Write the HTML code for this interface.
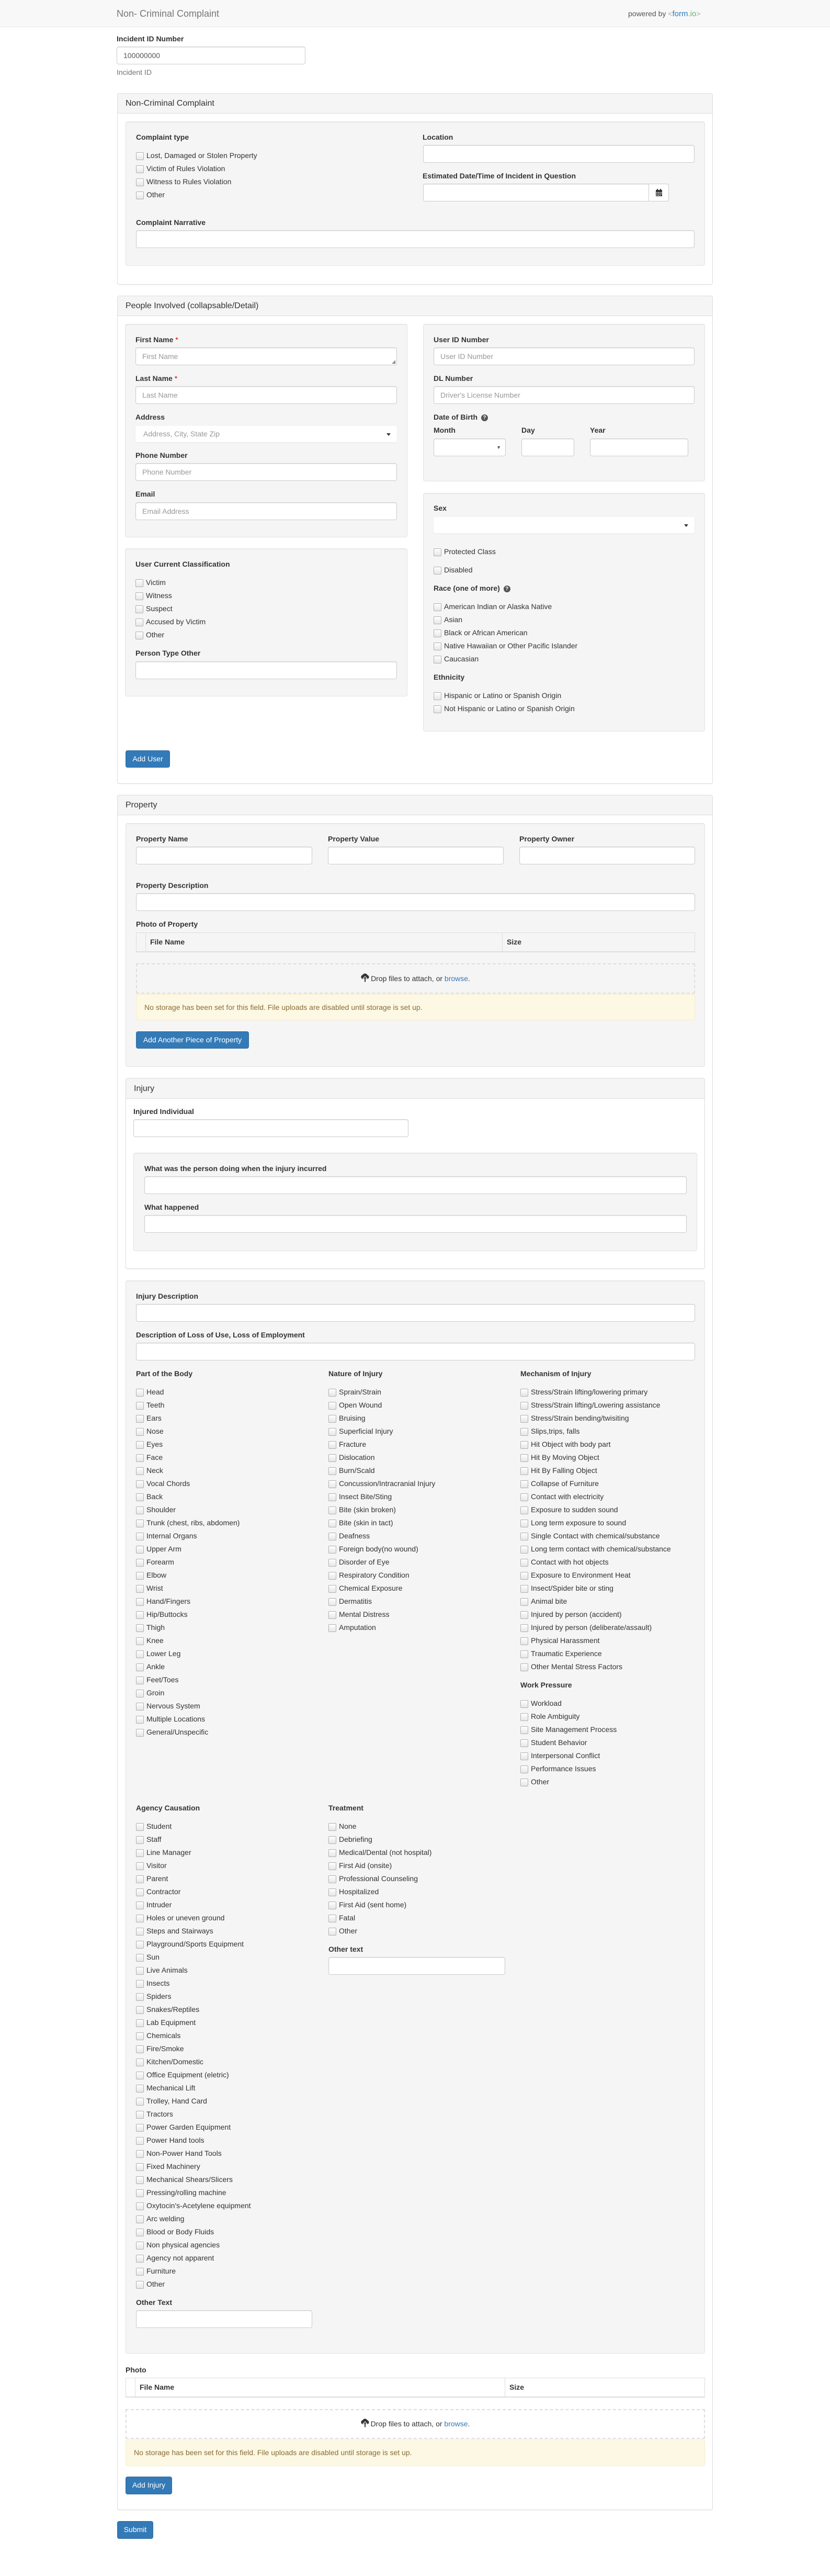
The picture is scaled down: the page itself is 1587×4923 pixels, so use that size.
<!DOCTYPE html>
<html><head><meta charset="utf-8">
<style>
*{box-sizing:border-box;margin:0;padding:0}
body{width:1587px;height:4923px;position:relative;background:#fff;font-family:"Liberation Sans",Arial,sans-serif;font-size:14px;color:#333;overflow:hidden}
.a{position:absolute}
.l{position:absolute;font-weight:bold;line-height:20px;white-space:nowrap}
.i{position:absolute;height:34px;border:1px solid #ccc;border-radius:4px;background:#fff;box-shadow:inset 0 1px 1px rgba(0,0,0,.075);color:#999;line-height:32px;padding-left:12px;white-space:nowrap}
.w{position:absolute;background:#f5f5f5;border:1px solid #e3e3e3;border-radius:4px;box-shadow:inset 0 1px 1px rgba(0,0,0,.05)}
.p{position:absolute;border:1px solid #ddd;border-radius:4px;background:#fff;box-shadow:0 1px 1px rgba(0,0,0,.05)}
.ph{position:absolute;left:0;right:0;top:0;background:#f5f5f5;border-bottom:1px solid #ddd;border-radius:3px 3px 0 0;font-size:16px;padding-left:15px}
.c{position:absolute;padding-left:20px;line-height:20px;white-space:nowrap}
.c::before,.k .c::before{content:"";position:absolute;left:0;top:4px;width:13px;height:13px;border:1px solid #b0b0b0;border-radius:2px;background:linear-gradient(#fff,#e6e6e6)}
.k{position:absolute}
.k .c{position:relative;height:25px;line-height:25px}
.k .c::before{top:6px}
.b{position:absolute;background:#337ab7;border:1px solid #2e6da4;border-radius:4px;color:#fff;text-align:center;line-height:31px;white-space:nowrap}
.sel{position:absolute;height:31px;background:#fff;border-radius:4px;box-shadow:0 1px 2px rgba(0,0,0,.06);color:#999;line-height:31px;padding-left:15px}
.sel::after{content:"";position:absolute;right:12px;top:14px;border-left:4px solid transparent;border-right:4px solid transparent;border-top:5px solid #333}
.q{display:inline-block;width:13px;height:13px;border-radius:50%;background:#555;color:#fff;font-size:10px;line-height:13px;text-align:center;vertical-align:1px;margin-left:3px}
.tbl{position:absolute;height:38px;border:1px solid #ddd;border-bottom:2px solid #ddd;font-weight:bold;line-height:34px}
.dz{position:absolute;border:2px dashed #ddd;text-align:center;color:#333}
.dz svg{vertical-align:-3px;margin-right:3px}
.al{position:absolute;background:#fcf8e3;border:1px solid #faebcc;border-radius:4px;color:#8a6d3b}
.req{color:#c00;font-weight:normal}
</style></head><body>

<div class="a" style="left:0;top:0;width:1587px;height:52px;background:#f8f8f8;border-bottom:1px solid #e7e7e7"></div>
<div class="a" style="left:223px;top:15px;font-size:18px;color:#777;line-height:22px">Non- Criminal Complaint</div>
<div class="a" style="left:1201px;top:16px;line-height:20px;font-size:14px;color:#555">powered by <span style="color:#aaa">&lt;</span><span style="color:#2a7ab9;font-size:15px">form</span><span style="color:#5cb85c;font-size:15px">.io</span><span style="color:#aaa">&gt;</span></div>

<div class="l" style="left:223px;top:64px">Incident ID Number</div>
<div class="i" style="left:223px;top:89px;width:361px;color:#555">100000000</div>
<div class="a" style="left:223px;top:128px;color:#737373;line-height:20px">Incident ID</div>

<div class="p" style="left:224px;top:178px;width:1139px;height:366px"><div class="ph" style="height:38px;line-height:38px">Non-Criminal Complaint</div></div>
<div class="w" style="left:240px;top:232px;width:1108px;height:276px"></div>
<div class="l" style="left:260px;top:252px">Complaint type</div>
<div class="c" style="left:260px;top:287px">Lost, Damaged or Stolen Property</div>
<div class="c" style="left:260px;top:312px">Victim of Rules Violation</div>
<div class="c" style="left:260px;top:337px">Witness to Rules Violation</div>
<div class="c" style="left:260px;top:362px">Other</div>
<div class="l" style="left:808px;top:252px">Location</div>
<div class="i" style="left:809px;top:277px;width:519px"></div>
<div class="l" style="left:808px;top:326px">Estimated Date/Time of Incident in Question</div>
<div class="i" style="left:809px;top:351px;width:470px;border-radius:4px"></div>
<div class="a" style="left:1240px;top:351px;width:39px;height:34px;border:1px solid #ccc;border-radius:0 4px 4px 0;background:#fff">
<svg width="12" height="14" viewBox="0 0 12 14" style="position:absolute;left:13px;top:9px"><rect x="0" y="2" width="12" height="12" fill="#333"/><rect x="2" y="0" width="2" height="3" fill="#333"/><rect x="8" y="0" width="2" height="3" fill="#333"/><g fill="#fff"><rect x="1" y="6" width="2" height="1.5"/><rect x="4" y="6" width="2" height="1.5"/><rect x="7" y="6" width="2" height="1.5"/><rect x="1" y="9" width="2" height="1.5"/><rect x="4" y="9" width="2" height="1.5"/><rect x="7" y="9" width="2" height="1.5"/><rect x="1" y="12" width="2" height="1"/><rect x="4" y="12" width="2" height="1"/><rect x="7" y="12" width="2" height="1"/><rect x="10" y="6" width="1.5" height="1.5"/><rect x="10" y="9" width="1.5" height="1.5"/></g></svg></div>
<div class="l" style="left:260px;top:415px">Complaint Narrative</div>
<div class="i" style="left:260px;top:440px;width:1068px"></div>

<div class="p" style="left:224px;top:565px;width:1139px;height:933px"><div class="ph" style="height:38px;line-height:38px">People Involved (collapsable/Detail)</div></div>
<div class="w" style="left:239px;top:619px;width:540px;height:408px"></div>
<div class="l" style="left:259px;top:639px">First Name <span class="req">*</span></div>
<div class="i" style="left:259px;top:664px;width:500px">First Name<span style="position:absolute;right:2px;bottom:-10px;font-size:9px;color:#888">◢</span></div>
<div class="l" style="left:259px;top:713px">Last Name <span class="req">*</span></div>
<div class="i" style="left:259px;top:738px;width:500px">Last Name</div>
<div class="l" style="left:259px;top:787px">Address</div>
<div class="sel" style="left:259px;top:814px;width:500px">Address, City, State Zip</div>
<div class="l" style="left:259px;top:860px">Phone Number</div>
<div class="i" style="left:259px;top:885px;width:500px">Phone Number</div>
<div class="l" style="left:259px;top:934px">Email</div>
<div class="i" style="left:259px;top:960px;width:500px">Email Address</div>

<div class="w" style="left:239px;top:1048px;width:540px;height:283px"></div>
<div class="l" style="left:259px;top:1068px">User Current Classification</div>
<div class="k" style="left:259px;top:1100.5px"><div class="c">Victim</div><div class="c">Witness</div><div class="c">Suspect</div><div class="c">Accused by Victim</div><div class="c">Other</div></div>
<div class="l" style="left:259px;top:1238px">Person Type Other</div>
<div class="i" style="left:259px;top:1264px;width:500px"></div>

<div class="w" style="left:809px;top:619px;width:539px;height:301px"></div>
<div class="l" style="left:829px;top:639px">User ID Number</div>
<div class="i" style="left:829px;top:664px;width:499px">User ID Number</div>
<div class="l" style="left:829px;top:713px">DL Number</div>
<div class="i" style="left:829px;top:738px;width:499px">Driver's License Number</div>
<div class="l" style="left:829px;top:787px">Date of Birth <span class="q">?</span></div>
<div class="l" style="left:829px;top:812px">Month</div>
<div class="l" style="left:997px;top:812px">Day</div>
<div class="l" style="left:1128px;top:812px">Year</div>
<div class="i" style="left:829px;top:838px;width:138px"><span style="position:absolute;right:8px;top:0;font-size:9px;color:#555">▼</span></div>
<div class="i" style="left:997px;top:838px;width:101px"></div>
<div class="i" style="left:1128px;top:838px;width:188px"></div>

<div class="w" style="left:809px;top:942px;width:539px;height:456px"></div>
<div class="l" style="left:829px;top:961px">Sex</div>
<div class="sel" style="left:829px;top:988px;width:499px"></div>
<div class="c" style="left:829px;top:1044px">Protected Class</div>
<div class="c" style="left:829px;top:1079px">Disabled</div>
<div class="l" style="left:829px;top:1114px">Race (one of more) <span class="q">?</span></div>
<div class="k" style="left:829px;top:1146.5px"><div class="c">American Indian or Alaska Native</div><div class="c">Asian</div><div class="c">Black or African American</div><div class="c">Native Hawaiian or Other Pacific Islander</div><div class="c">Caucasian</div></div>
<div class="l" style="left:829px;top:1284px">Ethnicity</div>
<div class="k" style="left:829px;top:1316.5px"><div class="c">Hispanic or Latino or Spanish Origin</div><div class="c">Not Hispanic or Latino or Spanish Origin</div></div>

<div class="b" style="left:240px;top:1434px;width:85px;height:33px">Add User</div>

<div class="p" style="left:224px;top:1519px;width:1139px;height:3278px"><div class="ph" style="height:38px;line-height:38px">Property</div></div>
<div class="w" style="left:240px;top:1573px;width:1108px;height:466px"></div>
<div class="l" style="left:260px;top:1593px">Property Name</div>
<div class="l" style="left:627px;top:1593px">Property Value</div>
<div class="l" style="left:993px;top:1593px">Property Owner</div>
<div class="i" style="left:260px;top:1618px;width:337px"></div>
<div class="i" style="left:627px;top:1618px;width:336px"></div>
<div class="i" style="left:993px;top:1618px;width:336px"></div>
<div class="l" style="left:260px;top:1682px">Property Description</div>
<div class="i" style="left:260px;top:1707px;width:1069px"></div>
<div class="l" style="left:260px;top:1756px">Photo of Property</div>
<div class="tbl" style="left:260px;top:1782px;width:1069px"><span class="a" style="left:17px;top:0;height:35px;border-left:1px solid #ddd"></span><span class="a" style="left:26px">File Name</span><span class="a" style="left:699px;top:0;height:35px;border-left:1px solid #ddd"></span><span class="a" style="left:708px">Size</span></div>
<div class="dz" style="left:260px;top:1841px;width:1069px;height:58px;line-height:54px"><svg width="16" height="18" viewBox="0 0 16 18"><path d="M4 11a4 4 0 0 1-0.5-7.9A5 5 0 0 1 12.5 3.5 3.8 3.8 0 0 1 12 11z" fill="#333"/><path d="M8 6l-4 4h2.5v7h3v-7H12z" fill="#333" stroke="#f5f5f5" stroke-width="1"/></svg>Drop files to attach, or <span style="color:#337ab7">browse</span>.</div>
<div class="al" style="left:260px;top:1900px;width:1069px;height:50px;line-height:48px;padding-left:15px">No storage has been set for this field. File uploads are disabled until storage is set up.</div>
<div class="b" style="left:260px;top:1971px;width:216px;height:33px">Add Another Piece of Property</div>

<div class="p" style="left:240px;top:2060px;width:1108px;height:365px"><div class="ph" style="height:39px;line-height:39px">Injury</div></div>
<div class="l" style="left:255px;top:2114px">Injured Individual</div>
<div class="i" style="left:255px;top:2139px;width:526px"></div>
<div class="w" style="left:255px;top:2203px;width:1078px;height:188px"></div>
<div class="l" style="left:276px;top:2223px">What was the person doing when the injury incurred</div>
<div class="i" style="left:276px;top:2248px;width:1037px"></div>
<div class="l" style="left:276px;top:2297px">What happened</div>
<div class="i" style="left:276px;top:2322px;width:1037px"></div>

<div class="w" style="left:240px;top:2447px;width:1108px;height:2051px"></div>
<div class="l" style="left:260px;top:2467px">Injury Description</div>
<div class="i" style="left:260px;top:2492px;width:1069px"></div>
<div class="l" style="left:260px;top:2541px">Description of Loss of Use, Loss of Employment</div>
<div class="i" style="left:260px;top:2566px;width:1069px"></div>
<div class="l" style="left:260px;top:2615px">Part of the Body</div>
<div class="l" style="left:628px;top:2615px">Nature of Injury</div>
<div class="l" style="left:995px;top:2615px">Mechanism of Injury</div>
<div class="k" style="left:260px;top:2647.5px">
<div class="c">Head</div><div class="c">Teeth</div><div class="c">Ears</div><div class="c">Nose</div><div class="c">Eyes</div><div class="c">Face</div><div class="c">Neck</div><div class="c">Vocal Chords</div><div class="c">Back</div><div class="c">Shoulder</div><div class="c">Trunk (chest, ribs, abdomen)</div><div class="c">Internal Organs</div><div class="c">Upper Arm</div><div class="c">Forearm</div><div class="c">Elbow</div><div class="c">Wrist</div><div class="c">Hand/Fingers</div><div class="c">Hip/Buttocks</div><div class="c">Thigh</div><div class="c">Knee</div><div class="c">Lower Leg</div><div class="c">Ankle</div><div class="c">Feet/Toes</div><div class="c">Groin</div><div class="c">Nervous System</div><div class="c">Multiple Locations</div><div class="c">General/Unspecific</div></div>
<div class="k" style="left:628px;top:2647.5px">
<div class="c">Sprain/Strain</div><div class="c">Open Wound</div><div class="c">Bruising</div><div class="c">Superficial Injury</div><div class="c">Fracture</div><div class="c">Dislocation</div><div class="c">Burn/Scald</div><div class="c">Concussion/Intracranial Injury</div><div class="c">Insect Bite/Sting</div><div class="c">Bite (skin broken)</div><div class="c">Bite (skin in tact)</div><div class="c">Deafness</div><div class="c">Foreign body(no wound)</div><div class="c">Disorder of Eye</div><div class="c">Respiratory Condition</div><div class="c">Chemical Exposure</div><div class="c">Dermatitis</div><div class="c">Mental Distress</div><div class="c">Amputation</div></div>
<div class="k" style="left:995px;top:2647.5px">
<div class="c">Stress/Strain lifting/lowering primary</div><div class="c">Stress/Strain lifting/Lowering assistance</div><div class="c">Stress/Strain bending/twisiting</div><div class="c">Slips,trips, falls</div><div class="c">Hit Object with body part</div><div class="c">Hit By Moving Object</div><div class="c">Hit By Falling Object</div><div class="c">Collapse of Furniture</div><div class="c">Contact with electricity</div><div class="c">Exposure to sudden sound</div><div class="c">Long term exposure to sound</div><div class="c">Single Contact with chemical/substance</div><div class="c">Long term contact with chemical/substance</div><div class="c">Contact with hot objects</div><div class="c">Exposure to Environment Heat</div><div class="c">Insect/Spider bite or sting</div><div class="c">Animal bite</div><div class="c">Injured by person (accident)</div><div class="c">Injured by person (deliberate/assault)</div><div class="c">Physical Harassment</div><div class="c">Traumatic Experience</div><div class="c">Other Mental Stress Factors</div></div>
<div class="l" style="left:995px;top:3210px">Work Pressure</div>
<div class="k" style="left:995px;top:3242.5px">
<div class="c">Workload</div><div class="c">Role Ambiguity</div><div class="c">Site Management Process</div><div class="c">Student Behavior</div><div class="c">Interpersonal Conflict</div><div class="c">Performance Issues</div><div class="c">Other</div></div>

<div class="l" style="left:260px;top:3445px">Agency Causation</div>
<div class="l" style="left:628px;top:3445px">Treatment</div>
<div class="k" style="left:260px;top:3477.5px">
<div class="c">Student</div><div class="c">Staff</div><div class="c">Line Manager</div><div class="c">Visitor</div><div class="c">Parent</div><div class="c">Contractor</div><div class="c">Intruder</div><div class="c">Holes or uneven ground</div><div class="c">Steps and Stairways</div><div class="c">Playground/Sports Equipment</div><div class="c">Sun</div><div class="c">Live Animals</div><div class="c">Insects</div><div class="c">Spiders</div><div class="c">Snakes/Reptiles</div><div class="c">Lab Equipment</div><div class="c">Chemicals</div><div class="c">Fire/Smoke</div><div class="c">Kitchen/Domestic</div><div class="c">Office Equipment (eletric)</div><div class="c">Mechanical Lift</div><div class="c">Trolley, Hand Card</div><div class="c">Tractors</div><div class="c">Power Garden Equipment</div><div class="c">Power Hand tools</div><div class="c">Non-Power Hand Tools</div><div class="c">Fixed Machinery</div><div class="c">Mechanical Shears/Slicers</div><div class="c">Pressing/rolling machine</div><div class="c">Oxytocin's-Acetylene equipment</div><div class="c">Arc welding</div><div class="c">Blood or Body Fluids</div><div class="c">Non physical agencies</div><div class="c">Agency not apparent</div><div class="c">Furniture</div><div class="c">Other</div></div>
<div class="k" style="left:628px;top:3477.5px">
<div class="c">None</div><div class="c">Debriefing</div><div class="c">Medical/Dental (not hospital)</div><div class="c">First Aid (onsite)</div><div class="c">Professional Counseling</div><div class="c">Hospitalized</div><div class="c">First Aid (sent home)</div><div class="c">Fatal</div><div class="c">Other</div></div>
<div class="l" style="left:628px;top:3715px">Other text</div>
<div class="i" style="left:628px;top:3740px;width:338px"></div>
<div class="l" style="left:260px;top:4390px">Other Text</div>
<div class="i" style="left:260px;top:4415px;width:337px"></div>

<div class="l" style="left:240px;top:4519px">Photo</div>
<div class="tbl" style="left:240px;top:4544px;width:1108px"><span class="a" style="left:17px;top:0;height:35px;border-left:1px solid #ddd"></span><span class="a" style="left:26px">File Name</span><span class="a" style="left:724px;top:0;height:35px;border-left:1px solid #ddd"></span><span class="a" style="left:733px">Size</span></div>
<div class="dz" style="left:240px;top:4604px;width:1108px;height:57px;line-height:53px"><svg width="16" height="18" viewBox="0 0 16 18"><path d="M4 11a4 4 0 0 1-0.5-7.9A5 5 0 0 1 12.5 3.5 3.8 3.8 0 0 1 12 11z" fill="#333"/><path d="M8 6l-4 4h2.5v7h3v-7H12z" fill="#333" stroke="#fff" stroke-width="1"/></svg>Drop files to attach, or <span style="color:#337ab7">browse</span>.</div>
<div class="al" style="left:240px;top:4662px;width:1108px;height:51px;line-height:49px;padding-left:15px">No storage has been set for this field. File uploads are disabled until storage is set up.</div>
<div class="b" style="left:240px;top:4733px;width:89px;height:34px">Add Injury</div>

<div class="b" style="left:224px;top:4818px;width:69px;height:34px">Submit</div>
</body></html>
